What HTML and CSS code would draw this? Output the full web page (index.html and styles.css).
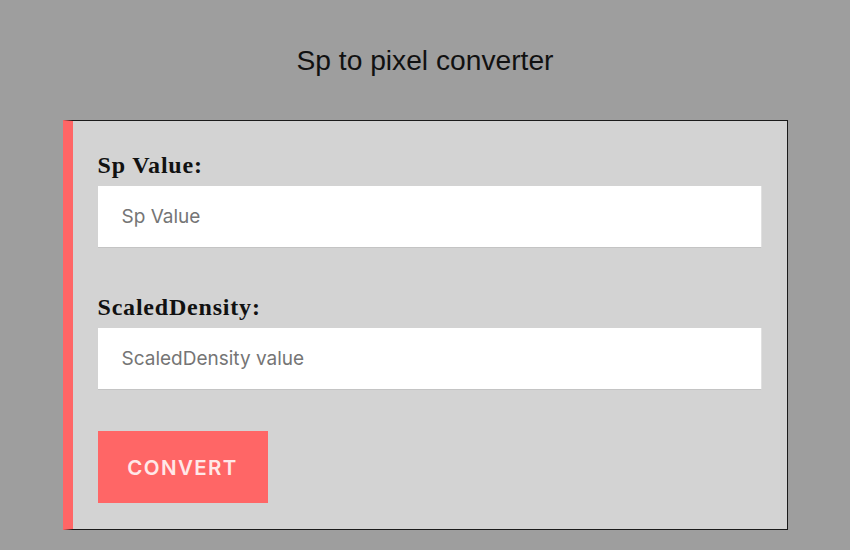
FILE: index.html
```html
<!DOCTYPE html>
<html>
<head>
<meta charset="utf-8">
<link rel="stylesheet" href="styles.css">
</head>
<body>
<h1 class="title">Sp to pixel converter</h1>
<form class="card">
  <label class="label" for="sp">Sp Value:</label>
  <input class="field" id="sp" type="text" placeholder="Sp Value">
  <label class="label label-second" for="sd">ScaledDensity:</label>
  <input class="field" id="sd" type="text" placeholder="ScaledDensity value">
  <button class="btn" type="button">CONVERT</button>
</form>
</body>
</html>
```
FILE: styles.css
```css
html, body {
  margin: 0;
  padding: 0;
  background: #9e9e9e;
}
body {
  padding-top: 44px;
}
.title {
  margin: 0 0 44px;
  font-family: "Liberation Sans", Arial, sans-serif;
  font-weight: normal;
  font-size: 28.2px;
  line-height: 32px;
  text-align: center;
  color: #111;
}
.card {
  box-sizing: border-box;
  width: 725px;
  margin: 0 auto;
  background: #d3d3d3;
  border: 1px solid #1a1a1a;
  border-left: 10px solid #ff6666;
  padding: 30px 25px 26px 25px;
  display: flex;
  flex-direction: column;
  align-items: flex-start;
}
.label {
  font-family: "Liberation Serif", "Times New Roman", serif;
  font-weight: bold;
  font-size: 24px;
  letter-spacing: 0.8px;
  line-height: 28px;
  color: #111;
  margin-bottom: 7px;
}
.label-second {
  margin-top: 45px;
}
.field {
  box-sizing: border-box;
  width: 100%;
  height: 62px;
  border: none;
  border-bottom: 1px solid #c4c4c4;
  border-right: 1px solid #e0e0e0;
  background: #fff;
  padding: 0 24px;
  font-family: Inter, "Noto Sans", sans-serif;
  font-size: 19px;
  color: #333;
  outline: none;
}
.field::placeholder {
  color: #757575;
}
.btn {
  margin-top: 41px;
  width: 170px;
  height: 72px;
  border: none;
  background: #ff6666;
  color: #ffe8e8;
  font-family: Inter, "Noto Sans", sans-serif;
  font-weight: 600;
  font-size: 20.5px;
  letter-spacing: 1.4px;
  padding: 0;
}
```
